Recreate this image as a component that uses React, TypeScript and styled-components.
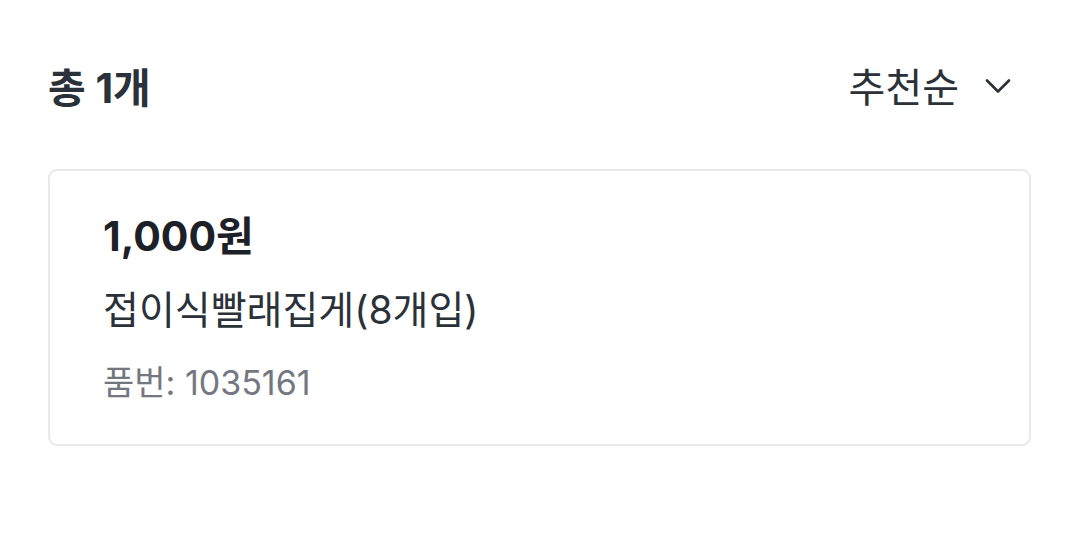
import styled, { createGlobalStyle } from 'styled-components';

const GlobalStyle = createGlobalStyle`
    html, body {
        margin: 0;
        padding: 0;
        background: #ffffff;
    }
    body {
        font-family: 'Inter', 'Noto Sans CJK KR', sans-serif;
        color: #2b2f36;
    }
`;

const StyledPage = styled.div`
    padding: 53px 35px 0 48px;
`;

const StyledHeader = styled.div`
    display: flex;
    align-items: center;
    justify-content: space-between;
    height: 64px;
`;

const StyledTotal = styled.h2`
    margin: 0;
    font-size: 41px;
    font-weight: 700;
    color: #2b3138;
`;

const StyledSortButton = styled.button`
    display: flex;
    align-items: center;
    gap: 26px;
    padding: 0 20px 0 0;
    border: none;
    background: none;
    font-family: inherit;
    font-size: 40px;
    color: #2b3138;
    cursor: pointer;
`;

const StyledChevron = styled.svg`
    width: 26px;
    height: 16px;
    margin-top: 2px;
`;

const StyledCard = styled.div`
    margin-top: 52px;
    border: 2px solid #e8e9eb;
    border-radius: 9px;
    padding: 39px 53px 36px;
    display: flex;
    flex-direction: column;
    gap: 22px;
`;

const StyledPrice = styled.div`
    font-size: 41px;
    font-weight: 700;
    color: #1d2127;
    line-height: 52px;
`;

const StyledName = styled.div`
    font-size: 39px;
    color: #2b3138;
    line-height: 52px;
`;

const StyledCode = styled.div`
    font-size: 34px;
    color: #737880;
    line-height: 50px;
`;

const App = () => {
    return (
        <>
            <GlobalStyle />
            <StyledPage>
                <StyledHeader>
                    <StyledTotal>총 1개</StyledTotal>
                    <StyledSortButton>
                        추천순
                        <StyledChevron viewBox="0 0 26 16" fill="none">
                            <path d="M2 2.5L13 13.5L24 2.5" stroke="#2b3138" strokeWidth="2.6" strokeLinecap="round" strokeLinejoin="round" />
                        </StyledChevron>
                    </StyledSortButton>
                </StyledHeader>
                <StyledCard>
                    <StyledPrice>1,000원</StyledPrice>
                    <StyledName>접이식빨래집게(8개입)</StyledName>
                    <StyledCode>품번: 1035161</StyledCode>
                </StyledCard>
            </StyledPage>
        </>
    );
};

export default App;
